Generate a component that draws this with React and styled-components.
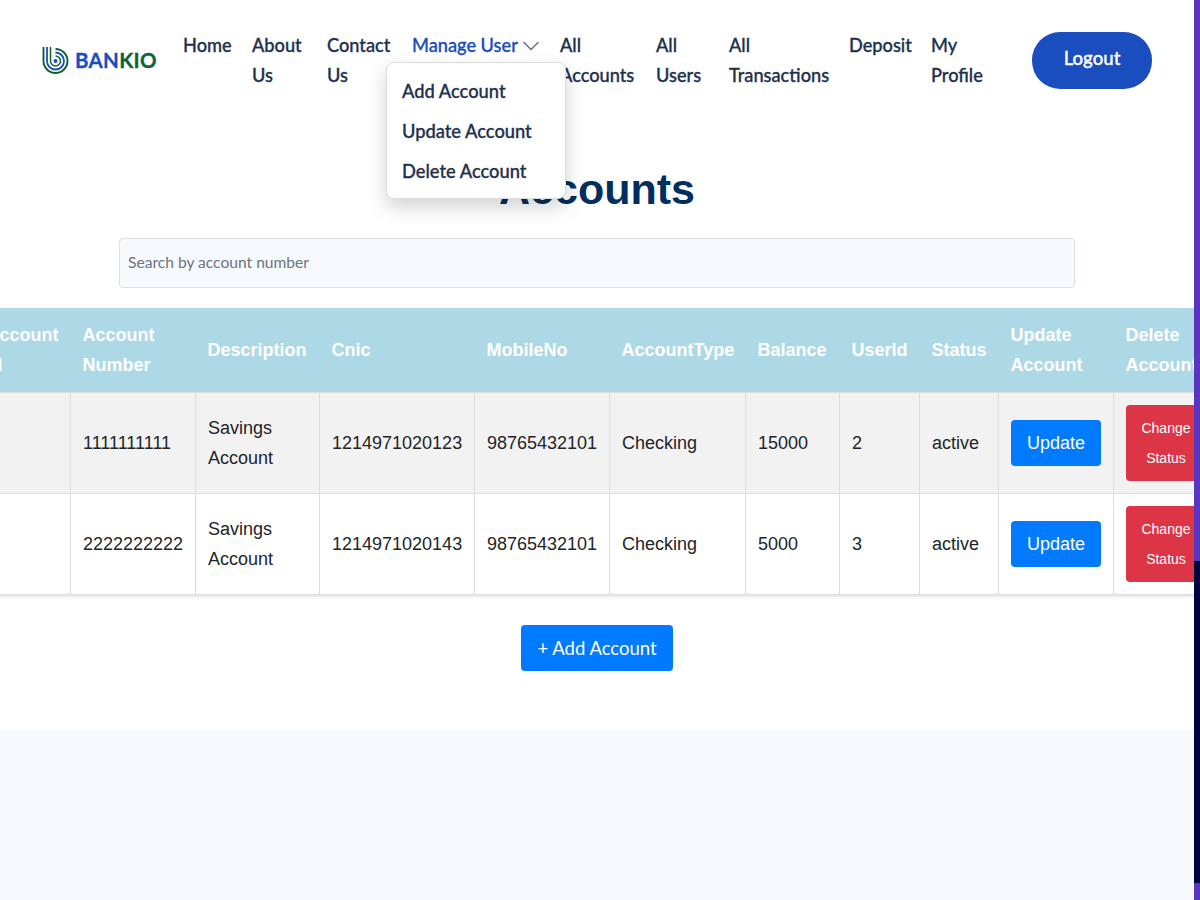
import React from "react";
import styled, { createGlobalStyle } from "styled-components";
import { ChevronDown } from "lucide-react";

const navFont = `"Lato", "Noto Sans", sans-serif`;
const tableFont = `"Liberation Sans", Arial, sans-serif`;

const GlobalStyle = createGlobalStyle`
    html, body {
        margin: 0;
        padding: 0;
        height: 900px;
        overflow: hidden;
        background: #fff;
        font-family: ${navFont};
    }
`;

const Shell = styled.div`
    display: flex;
    width: 1200px;
    height: 900px;
    overflow: hidden;
`;

const Page = styled.div`
    width: 1194px;
    flex: none;
    display: flex;
    flex-direction: column;
    overflow: hidden;
`;

const Strip = styled.div`
    width: 6px;
    flex: none;
    display: flex;
    flex-direction: column;
`;

const StripPart = styled.div`
    height: ${p => p.$h}px;
    background: ${p => p.$color};
`;

const Header = styled.header`
    display: flex;
    align-items: center;
    height: 60px;
    padding: 30px 42px 30px 42px;
`;

const Brand = styled.div`
    display: flex;
    align-items: center;
    gap: 6px;
    width: 141px;
    flex: none;
    font-size: 20.5px;
    font-weight: 700;
    letter-spacing: 0.3px;
    -webkit-text-stroke: 0.3px currentColor;
    color: #1a4dbe;
    span {
        color: #0d6234;
    }
`;

const Nav = styled.nav`
    display: flex;
    align-items: flex-start;
    gap: 20px;
    height: 60px;
    flex: none;
`;

const NavItem = styled.a`
    position: relative;
    display: block;
    width: ${p => p.$w}px;
    font-size: 18.2px;
    font-weight: 500;
    line-height: 30px;
    -webkit-text-stroke: 0.3px currentColor;
    color: ${p => (p.$active ? "#1a4dbe" : "#212f4d")};
`;

const Chevron = styled(ChevronDown)`
    position: absolute;
    left: 105px;
    top: 2px;
    color: #6b7280;
    -webkit-text-stroke: 0;
`;

const Menu = styled.div`
    position: absolute;
    left: -26px;
    top: 32px;
    z-index: 5;
    width: 180px;
    height: 137px;
    box-sizing: border-box;
    padding: 8px 15px;
    background: #fff;
    border: 1px solid #ddd;
    border-radius: 8px;
    box-shadow: 0 8px 20px rgba(0, 0, 0, 0.18);
`;

const MenuItem = styled.div`
    height: 40px;
    line-height: 40px;
    font-size: 18.3px;
    color: #212f4d;
    white-space: nowrap;
`;

const Logout = styled.button`
    width: 120px;
    height: 57px;
    margin-left: 48px;
    padding: 0 0 4px;
    flex: none;
    border: 0;
    border-radius: 28px;
    background: #1a4dbe;
    color: #fff;
    font-family: ${navFont};
    font-size: 18.6px;
    font-weight: 500;
    -webkit-text-stroke: 0.3px currentColor;
`;

const Title = styled.h1`
    margin: 44px 0 24px;
    height: 50px;
    line-height: 50px;
    text-align: center;
    font-family: ${tableFont};
    font-size: 43px;
    font-weight: 700;
    color: #002f5f;
`;

const SearchRow = styled.div`
    display: flex;
    justify-content: center;
    margin-bottom: 20px;
`;

const Search = styled.input`
    width: 956px;
    height: 50px;
    box-sizing: border-box;
    padding: 0 9px 2px 8px;
    background: #f6fafe;
    border: 1px solid #dcdfe3;
    border-radius: 4px;
    font-family: ${navFont};
    font-size: 15.6px;
    &::placeholder {
        color: #6c757d;
        opacity: 1;
    }
`;

const TableWrap = styled.div`
    display: flex;
    justify-content: center;
    overflow: hidden;
    padding-bottom: 6px;
`;

const Table = styled.table`
    flex: none;
    width: 1245px;
    table-layout: fixed;
    border-collapse: collapse;
    font-family: ${tableFont};
    font-size: 18px;
    line-height: 30px;
    box-shadow: 0 1px 4px rgba(0, 0, 0, 0.15);
`;

const Th = styled.th`
    width: ${p => p.$w}px;
    height: 84px;
    box-sizing: border-box;
    padding: 0 12px;
    background: #add8e6;
    color: #fff;
    font-weight: 700;
    text-align: left;
`;

const Row = styled.tr`
    background: ${p => (p.$shade ? "#f2f2f2" : "#fff")};
`;

const Td = styled.td`
    height: 101px;
    box-sizing: border-box;
    padding: 0 12px;
    border: 1px solid #ddd;
    color: #212529;
`;

const UpdateButton = styled.button`
    display: block;
    width: 90px;
    height: 46px;
    padding: 2px 0 0;
    border: 0;
    border-radius: 4px;
    background: #007bff;
    color: #fff;
    font-family: ${tableFont};
    font-size: 18px;
`;

const StatusButton = styled.button`
    display: block;
    width: 80px;
    height: 76px;
    padding: 0;
    border: 0;
    border-radius: 4px;
    background: #dc3545;
    color: #fff;
    font-family: ${tableFont};
    font-size: 14px;
    line-height: 30px;
`;

const AddRow = styled.div`
    display: flex;
    justify-content: center;
    margin-top: 24px;
    height: 105px;
`;

const AddButton = styled.button`
    width: 152px;
    height: 46px;
    border: 0;
    border-radius: 4px;
    background: #007bff;
    color: #fff;
    font-family: ${navFont};
    font-size: 18.5px;
`;

const Footer = styled.footer`
    flex: 1;
    background: #f6fafe;
`;

const LogoMark = () => (
    <svg width="27" height="28" viewBox="0 0 27 28" fill="none">
        <path d="M1.5 1v14a12 12 0 1 0 12-12" stroke="#0d6234" strokeWidth="1.9" />
        <path d="M5 1v14a8.5 8.5 0 1 0 8.5-8.5" stroke="#1a4dbe" strokeWidth="1.8" />
        <path d="M8.5 1v14a5 5 0 1 0 5-5" stroke="#0d6234" strokeWidth="1.5" />
        <circle cx="13.5" cy="15" r="2" fill="#1a4dbe" />
    </svg>
);

const links = [
    ["Home", 49],
    ["About Us", 55],
    ["Contact Us", 65],
    ["Manage User", 128],
    ["All Accounts", 76],
    ["All Users", 53],
    ["All Transactions", 100],
    ["Deposit", 62],
    ["My Profile", 53],
];

const columns = [
    ["Account Id", 96],
    ["Account Number", 125],
    ["Description", 124],
    ["Cnic", 155],
    ["MobileNo", 135],
    ["AccountType", 136],
    ["Balance", 94],
    ["UserId", 80],
    ["Status", 79],
    ["Update Account", 115],
    ["Delete Account", 106],
];

const accounts = [
    { id: 1, number: "1111111111", cnic: "1214971020123", balance: 15000, user: 2 },
    { id: 2, number: "2222222222", cnic: "1214971020143", balance: 5000, user: 3 },
];

export default function App() {
    return (
        <Shell>
            <GlobalStyle />
            <Page>
                <Header>
                    <Brand>
                        <LogoMark />
                        <div>BAN<span>KIO</span></div>
                    </Brand>
                    <Nav>
                        {links.map(([label, w]) => (
                            <NavItem key={label} $w={w} $active={label === "Manage User"}>
                                {label}
                                {label === "Manage User" && (
                                    <>
                                        <Chevron size={28} strokeWidth={1.3} />
                                        <Menu>
                                            <MenuItem>Add Account</MenuItem>
                                            <MenuItem>Update Account</MenuItem>
                                            <MenuItem>Delete Account</MenuItem>
                                        </Menu>
                                    </>
                                )}
                            </NavItem>
                        ))}
                    </Nav>
                    <Logout>Logout</Logout>
                </Header>
                <Title>Accounts</Title>
                <SearchRow>
                    <Search placeholder="Search by account number" />
                </SearchRow>
                <TableWrap>
                    <Table>
                        <thead>
                            <tr>
                                {columns.map(([label, w]) => (
                                    <Th key={label} $w={w}>{label}</Th>
                                ))}
                            </tr>
                        </thead>
                        <tbody>
                            {accounts.map((a, i) => (
                                <Row key={a.id} $shade={i === 0}>
                                    <Td>{a.id}</Td>
                                    <Td>{a.number}</Td>
                                    <Td>Savings Account</Td>
                                    <Td>{a.cnic}</Td>
                                    <Td>98765432101</Td>
                                    <Td>Checking</Td>
                                    <Td>{a.balance}</Td>
                                    <Td>{a.user}</Td>
                                    <Td>active</Td>
                                    <Td><UpdateButton>Update</UpdateButton></Td>
                                    <Td><StatusButton>Change Status</StatusButton></Td>
                                </Row>
                            ))}
                        </tbody>
                    </Table>
                </TableWrap>
                <AddRow>
                    <AddButton>+ Add Account</AddButton>
                </AddRow>
                <Footer />
            </Page>
            <Strip>
                <StripPart $h={561} $color="#5a35c0" />
                <StripPart $h={322} $color="#03003f" />
                <StripPart $h={17} $color="#5a35c0" />
            </Strip>
        </Shell>
    );
}
